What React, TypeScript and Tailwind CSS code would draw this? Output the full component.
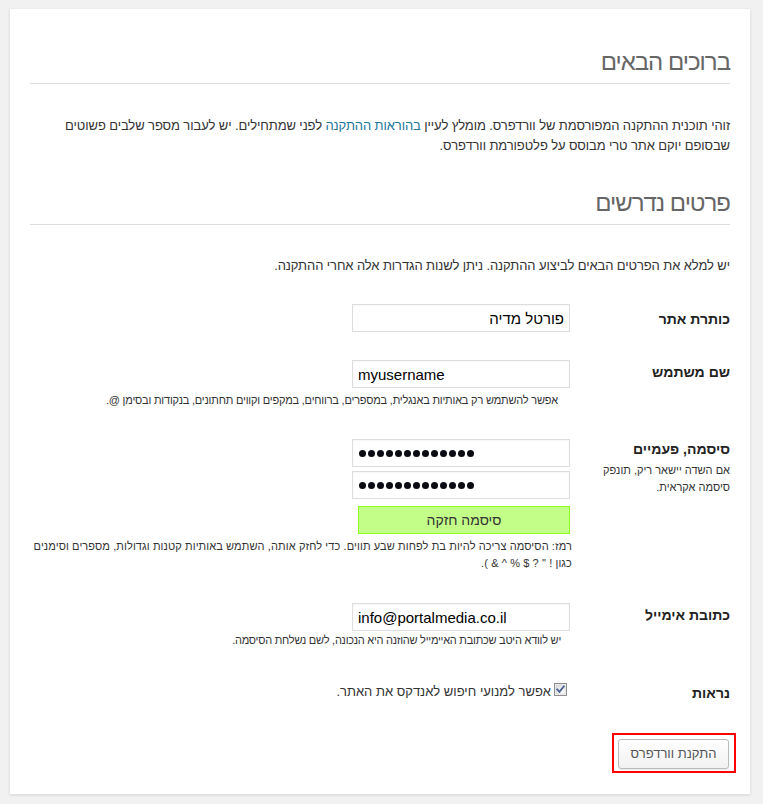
import React from "react";

const font = { fontFamily: '"Liberation Sans", Arial, sans-serif' };

function Dots() {
  return (
    <div className="flex items-center gap-[2px]">
      {Array.from({ length: 13 }).map((_, i) => (
        <span key={i} className="block w-[7px] h-[7px] rounded-full bg-[#0b0b14]" />
      ))}
    </div>
  );
}

export default function App() {
  return (
    <div dir="rtl" className="min-h-screen bg-[#f1f1f1] pt-[9px] pb-[12px]" style={font}>
      <div className="ml-[10px] mr-auto w-[740px] bg-white px-[20px] pt-[39px] pb-[21px] shadow-[0_1px_3px_rgba(0,0,0,0.13)] text-[#333]" dir="rtl">
        <h1 className="text-[24px] leading-[28px] tracking-[-1px] font-normal text-[#666] pb-[7px] border-b border-[#dedede]">ברוכים הבאים</h1>
        <p className="mt-[32px] text-[13px] leading-[20px] tracking-[-0.1px]">
          זוהי תוכנית ההתקנה המפורסמת של וורדפרס. מומלץ לעיין <a href="#" className="text-[#21759b]">בהוראות ההתקנה</a> לפני שמתחילים. יש לעבור מספר שלבים פשוטים שבסופם יוקם אתר טרי מבוסס על פלטפורמת וורדפרס.
        </p>
        <h1 className="mt-[33px] text-[24px] leading-[28px] tracking-[-1px] font-normal text-[#666] pb-[7px] border-b border-[#dedede]">פרטים נדרשים</h1>
        <p className="mt-[31px] text-[13px] leading-[20px] tracking-[-0.1px]">
          יש למלא את הפרטים הבאים לביצוע ההתקנה. ניתן לשנות הגדרות אלה אחרי ההתקנה.
        </p>

        {/* Row 1 */}
        <div className="mt-[28px] flex">
          <div className="w-[160px] shrink-0 pt-[5px] text-[14px] leading-[20px] font-bold text-[#222]">כותרת אתר</div>
          <div className="flex-1">
            <input readOnly dir="rtl" value="פורטל מדיה" className="w-[218px] h-[28px] border border-[#dddddd] bg-white px-[5px] text-[15px] text-black outline-none shadow-[inset_0_1px_2px_rgba(0,0,0,0.04)]" />
          </div>
        </div>

        {/* Row 2 */}
        <div className="mt-[28px] flex">
          <div className="w-[160px] shrink-0 pt-[2px] text-[14px] leading-[20px] font-bold text-[#222]">שם משתמש</div>
          <div className="flex-1">
            <input readOnly dir="ltr" value="myusername" className="w-[218px] h-[28px] border border-[#dddddd] bg-white px-[5px] text-[15px] text-black outline-none shadow-[inset_0_1px_2px_rgba(0,0,0,0.04)]" />
            <p className="mt-[4px] pr-[12px] text-[11px] leading-[16px] tracking-[-0.2px] text-[#333]">אפשר להשתמש רק באותיות באנגלית, במספרים, ברווחים, במקפים וקווים תחתונים, בנקודות ובסימן @.</p>
          </div>
        </div>

        {/* Row 3 */}
        <div className="mt-[31px] flex">
          <div className="w-[160px] shrink-0">
            <div className="text-[14px] leading-[20px] font-bold text-[#222]">סיסמה, פעמיים</div>
            <p className="mt-[3px] w-[130px] text-[11px] leading-[17px] text-[#333]">אם השדה יישאר ריק, תונפק סיסמה אקראית.</p>
          </div>
          <div className="flex-1">
            <div dir="ltr" className="w-[218px] h-[28px] border border-[#dddddd] bg-white pl-[6px] flex items-center shadow-[inset_0_1px_2px_rgba(0,0,0,0.04)]">
              <Dots />
            </div>
            <div dir="ltr" className="mt-[4px] w-[218px] h-[28px] border border-[#dddddd] bg-white pl-[6px] flex items-center shadow-[inset_0_1px_2px_rgba(0,0,0,0.04)]">
              <Dots />
            </div>
            <div className="mt-[7px] w-[212px] h-[28px] border border-[#8dff1c] bg-[#c3ff88] flex items-center justify-center text-[14px] text-[#333]">סיסמה חזקה</div>
            <p className="mt-[4px] -mr-[2px] text-[11px] leading-[17px] tracking-[0.1px] text-[#333]">
              רמז: הסיסמה צריכה להיות בת לפחות שבע תווים. כדי לחזק אותה, השתמש באותיות קטנות וגדולות, מספרים וסימנים כגון ! " ? $ % ^ &amp; ).
            </p>
          </div>
        </div>

        {/* Row 4 */}
        <div className="mt-[31px] flex">
          <div className="w-[160px] shrink-0 pt-[2px] text-[14px] leading-[20px] font-bold text-[#222]">כתובת אימייל</div>
          <div className="flex-1">
            <input readOnly dir="ltr" value="info@portalmedia.co.il" className="w-[218px] h-[28px] border border-[#dddddd] bg-white px-[5px] text-[15px] text-black outline-none shadow-[inset_0_1px_2px_rgba(0,0,0,0.04)]" />
            <p className="mt-[1px] pr-[9px] text-[11px] leading-[16px] tracking-[-0.25px] text-[#333]">יש לוודא היטב שכתובת האיימייל שהוזנה היא הנכונה, לשם נשלחת הסיסמה.</p>
          </div>
        </div>

        {/* Row 5 */}
        <div className="mt-[34px] flex">
          <div className="w-[160px] shrink-0 pt-[1px] text-[14px] leading-[20px] font-bold text-[#222]">נראות</div>
          <div className="flex-1 flex items-start pr-[3px]">
            <svg width="13" height="13" viewBox="0 0 13 13" className="mt-[1px] shrink-0">
              <defs>
                <linearGradient id="cb" x1="0" y1="0" x2="1" y2="1">
                  <stop offset="0" stopColor="#dcdcdc" />
                  <stop offset="1" stopColor="#ffffff" />
                </linearGradient>
              </defs>
              <rect x="0.5" y="0.5" width="12" height="12" fill="#f4f4f4" stroke="#8e8f8f" />
              <rect x="2" y="2" width="9" height="9" fill="url(#cb)" stroke="#c4c4c4" strokeWidth="0.5" />
              <path d="M3.2 6.4 L5.4 8.8 L9.8 3.4" fill="none" stroke="#4a5f97" strokeWidth="1.8" strokeLinecap="square" />
            </svg>
            <span className="mr-[3px] text-[13px] leading-[20px] text-[#333]">אפשר למנועי חיפוש לאנדקס את האתר.</span>
          </div>
        </div>

        {/* Submit */}
        <div className="mt-[30px] flex">
          <div className="-mr-[6px] border-2 border-[#ff0000] pt-[4px] pb-[2px] pr-[5px] pl-[4px]">
            <button className="w-[111px] h-[30px] rounded-[3px] border border-[#bbbbbb] bg-gradient-to-b from-[#fefefe] to-[#f2f2f2] text-[13px] text-[#555] shadow-[0_1px_0_rgba(0,0,0,0.08)]">התקנת וורדפרס</button>
          </div>
        </div>
      </div>
    </div>
  );
}
